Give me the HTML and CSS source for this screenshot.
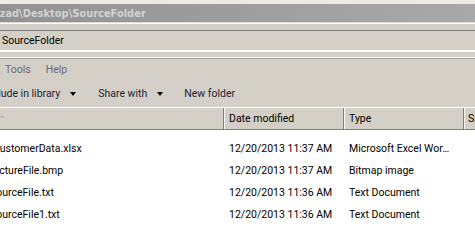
FILE: index.html
```html
<!DOCTYPE html>
<html lang="en">
<head>
    <meta charset="UTF-8">
    <title>SourceFolder</title>
    <link rel="stylesheet" href="styles.css">
</head>
<body>
<div class="window">
    <div class="top-strip"></div>
    <div class="titlebar">
        <span class="title">Azad\Desktop\SourceFolder</span>
    </div>
    <div class="address-band">
        <div class="address">SourceFolder</div>
    </div>
    <div class="menubar">
        <span class="menu-item">Tools</span>
        <span class="menu-item">Help</span>
    </div>
    <div class="toolbar">
        <span class="tool first">Include in library<span class="arrow"></span></span>
        <span class="tool">Share with<span class="arrow"></span></span>
        <span class="tool">New folder</span>
    </div>
    <div class="list">
        <div class="header">
            <div class="col col-name"><span class="sort"></span></div>
            <div class="col col-date">Date modified</div>
            <div class="col col-type">Type</div>
            <div class="col col-size">Size</div>
        </div>
        <div class="rows">
            <div class="row">
                <div class="cell cell-name"><span class="name n1">CustomerData.xlsx</span></div>
                <div class="cell cell-date">12/20/2013 11:37 AM</div>
                <div class="cell cell-type">Microsoft Excel Wor&hellip;</div>
            </div>
            <div class="row">
                <div class="cell cell-name"><span class="name n2">PictureFile.bmp</span></div>
                <div class="cell cell-date">12/20/2013 11:37 AM</div>
                <div class="cell cell-type">Bitmap image</div>
            </div>
            <div class="row">
                <div class="cell cell-name"><span class="name n3">SourceFile.txt</span></div>
                <div class="cell cell-date">12/20/2013 11:36 AM</div>
                <div class="cell cell-type">Text Document</div>
            </div>
            <div class="row">
                <div class="cell cell-name"><span class="name n3">SourceFile1.txt</span></div>
                <div class="cell cell-date">12/20/2013 11:36 AM</div>
                <div class="cell cell-type">Text Document</div>
            </div>
        </div>
    </div>
</div>
</body>
</html>
```

FILE: styles.css
```css
body {
    margin: 0;
    padding: 0;
    background-color: #ffffff;
    font-family: Roboto, 'Liberation Sans', sans-serif;
    font-size: 10.5px;
    color: #000;
}

.window {
    width: 475px;
    height: 249px;
    overflow: hidden;
    background-color: #d4d0c8;
    display: flex;
    flex-direction: column;
}

.top-strip {
    flex: none;
    height: 4px;
    background-color: #eeebe4;
}

/* inactive title bar */
.titlebar {
    flex: none;
    height: 18px;
    background: linear-gradient(to right, #929292, #a9a9a9);
    display: flex;
    align-items: center;
    overflow: hidden;
    white-space: nowrap;
}

.title {
    flex: none;
    margin-left: -8px;
    font-family: 'DejaVu Sans', sans-serif;
    font-weight: bold;
    font-size: 9.9px;
    color: #d2d2d2;
}

.address-band {
    flex: none;
    border-top: 1px solid #dedbd4;
    box-shadow: inset 0 1px 0 #ffffff;
    padding-top: 7px;
}

.address {
    height: 19px;
    border-top: 1px solid #808080;
    border-bottom: 2px solid #ffffff;
    line-height: 19px;
    padding-left: 2px;
}

.menubar {
    flex: none;
    margin-top: 5px;
    border-top: 1px solid #ffffff;
    height: 21px;
    display: flex;
    align-items: center;
    padding-left: 5px;
    gap: 15px;
    color: #6b6b6b;
    box-shadow: inset 0 1px 0 #a4a4a4;
    padding-top: 1px;
}

.toolbar {
    flex: none;
    height: 27px;
    display: flex;
    align-items: center;
    color: #1a2436;
    white-space: nowrap;
    overflow: hidden;
}

.tool {
    flex: none;
    display: flex;
    align-items: center;
    margin-right: 21px;
}

.tool.first {
    margin-left: -16px;
    margin-right: 22px;
}

.arrow {
    width: 0;
    height: 0;
    margin-left: 10px;
    border-left: 3.5px solid transparent;
    border-right: 3.5px solid transparent;
    border-top: 4px solid #000;
}

.list {
    flex: 1;
    background-color: #ffffff;
}

.header {
    display: flex;
    height: 21px;
    background-color: #d4d0c8;
    border-top: 1px solid #ffffff;
    border-bottom: 1px solid #808080;
    overflow: hidden;
}

.col {
    flex: none;
    display: flex;
    align-items: center;
    padding-left: 4px;
    border-right: 1px solid #808080;
    box-shadow: 1px 0 0 #ffffff;
    white-space: nowrap;
    overflow: hidden;
}

.col-name {
    width: 223px;
    padding-left: 0;
}

.sort {
    width: 0;
    height: 0;
    margin-left: -2px;
    margin-top: -4px;
    border-left: 4px solid transparent;
    border-right: 4px solid transparent;
    border-bottom: 3px solid #bcb9b2;
}

.col-date {
    width: 114px;
    margin-left: 1px;
}

.col-type {
    width: 114px;
    margin-left: 1px;
}

.col-size {
    width: 60px;
    margin-left: 1px;
    padding-left: 3px;
    border-right: none;
}

.rows {
    padding-top: 7px;
}

.row {
    display: flex;
    height: 22px;
    align-items: center;
    white-space: nowrap;
}

.cell {
    flex: none;
    overflow: hidden;
}

.cell-name {
    width: 229px;
}

.name {
    display: inline-block;
}

.n1 {
    margin-left: -7px;
}

.n2 {
    margin-left: -10px;
}

.n3 {
    margin-left: -10px;
}

.cell-date {
    width: 120px;
}

.cell-type {
    width: 126px;
}
```
